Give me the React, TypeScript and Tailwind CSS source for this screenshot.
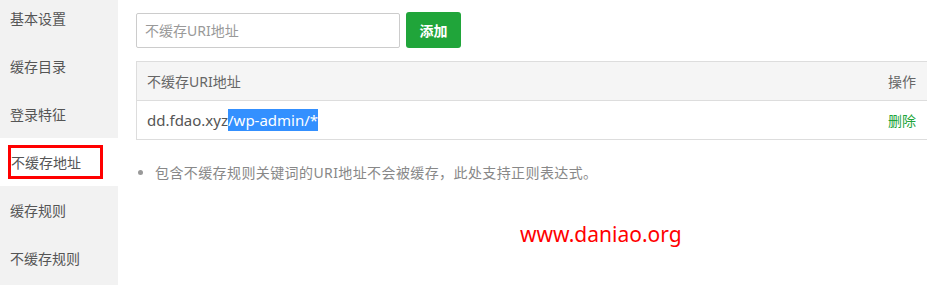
import React from 'react'

const menu = ['基本设置', '缓存目录', '登录特征', '不缓存地址', '缓存规则', '不缓存规则']

export default function App() {
  const active = 3

  return (
    <div
      className="relative flex h-[285px] w-[927px] overflow-hidden bg-white text-[14px]"
      style={{ fontFamily: '"Noto Sans", "Noto Sans CJK SC", sans-serif' }}
    >
      {/* sidebar */}
      <div className="w-[118px] shrink-0 bg-[#f2f2f2]">
        <ul className="-mt-[6px]">
          {menu.map((m, i) => (
            <li
              key={m}
              className={
                i === active
                  ? 'flex h-12 items-center bg-white pl-[8px]'
                  : 'flex h-12 items-center pl-[10px] text-[#555]'
              }
            >
              {i === active ? (
                <span className="flex h-[34px] w-[95px] items-center border-[3px] border-[#ff0000] text-[#555]">
                  不缓存地址
                </span>
              ) : (
                m
              )}
            </li>
          ))}
        </ul>
      </div>

      {/* content */}
      <div className="-mr-[4px] flex-1 pl-[18px] pt-[13px]">
        <div className="flex items-center gap-[6px]">
          <input
            placeholder="不缓存URI地址"
            className="h-[35px] w-[264px] rounded-[2px] border border-[#ccc] px-[8px] text-[14px] text-[#555] outline-none placeholder:text-[#999]"
          />
          <button className="-mt-[1px] h-[36px] w-[55px] rounded-[3px] bg-[#20a53a] text-[14px] font-bold text-white">
            添加
          </button>
        </div>

        <table className="mt-[13px] w-full border-collapse">
          <thead>
            <tr className="h-[39px] border border-[#ddd] bg-[#f5f5f5] text-[#666]">
              <th className="pl-[10px] text-left font-normal">不缓存URI地址</th>
              <th className="pr-[14px] text-right font-normal">操作</th>
            </tr>
          </thead>
          <tbody>
            <tr className="h-[39px] border border-[#ddd]">
              <td className="pl-[10px] text-[15px] text-[#555]">
                dd.fdao.xyz<span className="bg-[#3390ff] py-[1px] text-white">/wp-admin/*</span>
              </td>
              <td className="pr-[14px] text-right text-[#20a53a]">删除</td>
            </tr>
          </tbody>
        </table>

        <ul className="mt-[22px] pl-[2px] text-[#888]">
          <li className="flex items-center gap-[12px] text-[14px] tracking-[0.4px]">
            <span className="h-[5px] w-[5px] rounded-full bg-[#999]" />
            包含不缓存规则关键词的URI地址不会被缓存，此处支持正则表达式。
          </li>
        </ul>
      </div>

      <div className="absolute left-[520px] top-[219px] text-[21px] text-[#ff0000]">www.daniao.org</div>
    </div>
  )
}
